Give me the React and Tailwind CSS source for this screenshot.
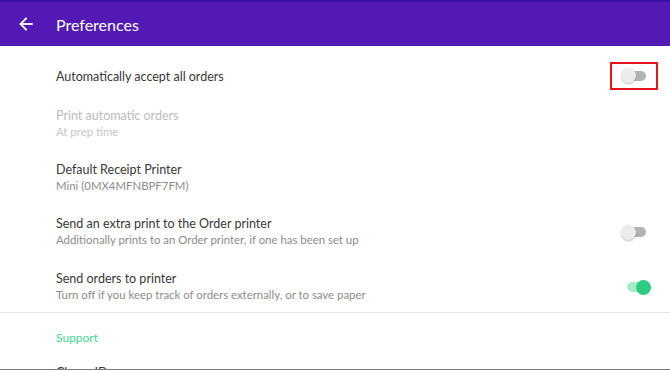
import React from 'react';

function Toggle({ on }) {
  return (
    <div className="relative w-[30px] h-[15px] flex items-center">
      <div className={`absolute h-[10px] rounded-full ${on ? 'left-[6px] w-[19px] bg-[#a6ecc9]' : 'left-[3px] w-[22px] bg-[#b3b3b3]'}`} />
      <div
        className={`absolute top-0 w-[15px] h-[15px] rounded-full ${on ? 'left-[15px] bg-[#2ecc82]' : 'left-0 bg-[#ececec] shadow-[0_1px_2px_rgba(0,0,0,0.25)]'}`}
      />
    </div>
  );
}

function Row({ title, sub, disabled, children, className }) {
  return (
    <div className={`flex items-center justify-between pl-[56px] pr-[19px] ${className || ''}`}>
      <div>
        <div className={`text-[12.5px] leading-[16px] ${disabled ? 'text-[#bcbcbc]' : 'text-[#383838]'}`}>{title}</div>
        {sub && (
          <div className={`text-[11.4px] leading-[16px] ${disabled ? 'text-[#c6c6c6]' : 'text-[#8c8c8c]'}`}>{sub}</div>
        )}
      </div>
      <div className="h-[16px] flex items-center">{children}</div>
    </div>
  );
}

export default function App() {
  return (
    <div
      className="w-[670px] h-[370px] overflow-hidden bg-white border-b border-[#7a7a7a]"
      style={{ fontFamily: 'Lato, "Open Sans", sans-serif' }}
    >
      <header className="h-[46px] bg-[#5219b5] border-t-2 border-[#3c0ea6] flex items-center">
        <svg className="ml-[19px]" width="14" height="14" viewBox="0 0 14 14" fill="none" stroke="white" strokeWidth="1.8" strokeLinecap="square">
          <path d="M13 7H2" />
          <path d="M7 1.5L1.5 7L7 12.5" />
        </svg>
        <h1 className="ml-[23px] text-[16px] text-white leading-none mt-[2px]">Preferences</h1>
      </header>

      <div className="border-b border-[#e6e6e6] pb-[9px]">
        <Row title="Automatically accept all orders" className="pt-[23px]">
          <div className="w-[48px] h-[28px] shrink-0 border-2 border-[#e8141c] flex items-center justify-start pl-[9px] mt-[-3px] mr-[-7px]">
            <Toggle />
          </div>
        </Row>
        <Row title="Print automatic orders" sub="At prep time" disabled className="pt-[23px]" />
        <Row title="Default Receipt Printer" sub="Mini (0MX4MFNBPF7FM)" className="pt-[22px]" />
        <Row title="Send an extra print to the Order printer" sub="Additionally prints to an Order printer, if one has been set up" className="pt-[22px]">
          <Toggle />
        </Row>
        <Row title="Send orders to printer" sub="Turn off if you keep track of orders externally, or to save paper" className="pt-[23px]">
          <Toggle on />
        </Row>
      </div>

      <div className="pl-[56px] pt-[17px] text-[12px] leading-[16px] text-[#3fd98c]">Support</div>
      <div className="pl-[56px] pt-[19px] text-[12.5px] leading-[16px] text-[#383838]">Clover ID</div>
    </div>
  );
}
